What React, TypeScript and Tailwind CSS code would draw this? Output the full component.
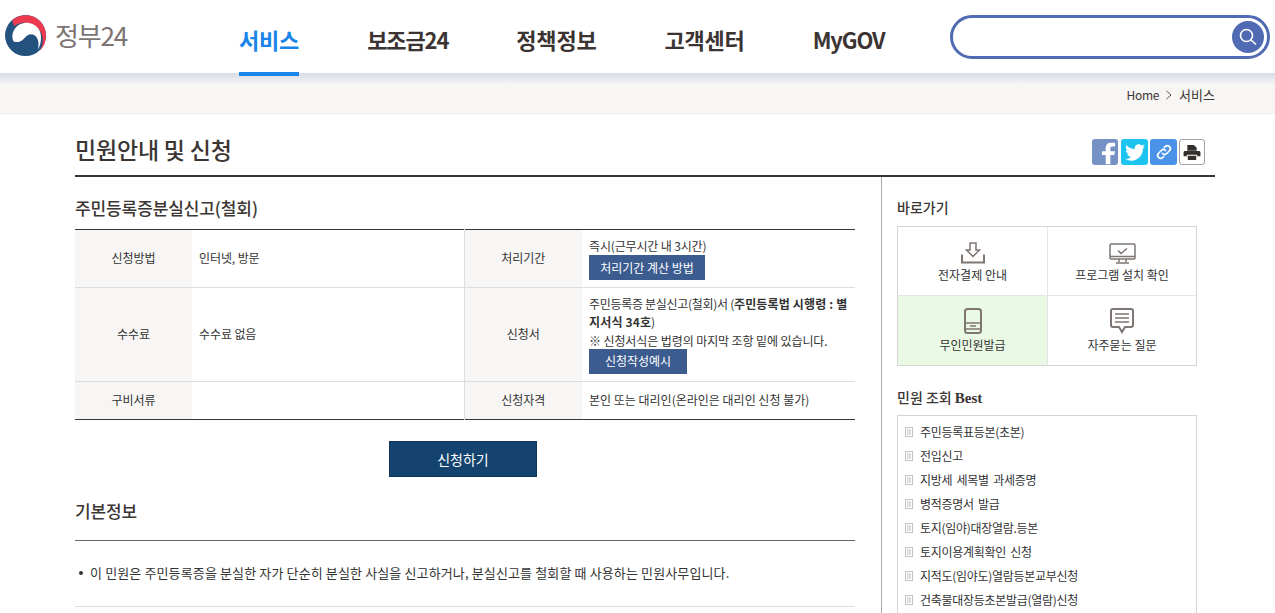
import React from "react";

function Logo() {
  return (
    <svg width="41" height="41" viewBox="0 0 40 40" className="shrink-0">
      <circle cx="20" cy="20" r="20" fill="#23527f" />
      <path d="M7 5C12 1 17 0 22 .2 32 1 40 10 40 20c0 6-2 11-6 15 2.500-4 3.500-9 2.500-14C35 13 28 7 18 7.500 14 8 11 9 9 11z" fill="#ee3a50" />
      <path d="M8 25C5 16 12 7 22 7.500c7 .5 12.500 5.500 13 12.500.5 5-.5 10-3 14 1-4 1-8-.5-11-2-4-6-5-9-3.500-3 1.500-4 5-8.500 6.500-2.500.8-5 .5-6-1z" fill="#fff" />
    </svg>
  );
}

function NavItem({ label, active, tight }: { label: string; active?: boolean; tight?: boolean }) {
  return (
    <div className={`h-[76px] flex items-center pt-[7px] border-b-[4px] text-[22px] font-bold ${tight ? "tracking-[-1.1px]" : "tracking-[-0.2px]"} ${active ? "border-[#1a85e8] text-[#1a85e8]" : "border-transparent text-[#3b3432]"}`}>
      {label}
    </div>
  );
}

function Th({ children }: { children: React.ReactNode }) {
  return <th className="bg-[#f7f6f4] font-normal text-center align-middle text-[12px] text-[#333] pb-[2px] tracking-[0px]">{children}</th>;
}

function Btn({ children, w, className }: { children: React.ReactNode; w: string; className?: string }) {
  return <div className={`${w} ${className ?? ""} h-[25px] bg-[#3c5b8f] text-white text-[12px] tracking-[0px] flex items-center justify-center`}>{children}</div>;
}

function Cell({ icon, label, green, className, iconBox }: { icon: React.ReactNode; label: string; green?: boolean; className?: string; iconBox: string }) {
  return (
    <div className={`h-[69px] flex flex-col items-center ${green ? "bg-[#e9f9e4]" : ""} ${className ?? ""}`}>
      <div className={`${iconBox} flex items-center justify-center`}>{icon}</div>
      <div className="text-[12px] leading-[20px] text-[#333] tracking-[0px]">{label}</div>
    </div>
  );
}

const best = ["주민등록표등본(초본)", "전입신고", "지방세 세목별 과세증명", "병적증명서 발급", "토지(임야)대장열람.등본", "토지이용계획확인 신청", "지적도(임야도)열람등본교부신청", "건축물대장등초본발급(열람)신청"];

export default function App() {
  return (
    <div className="h-[613px] w-[1275px] overflow-hidden bg-white text-[#333] font-['Noto_Sans_CJK_KR','Noto_Sans',sans-serif] tracking-[-0.3px]">
      <header className="h-[73px] bg-white relative z-10 flex items-start">
        <div className="w-[239px] pl-[5px] pt-[15px] flex items-center shrink-0">
          <Logo />
          <span className="ml-[9px] text-[26px] leading-[42px] text-[#7b7472] tracking-[-1.2px] -mt-[2px] font-['Noto_Sans_CJK_KR',sans-serif]">정부24</span>
        </div>
        <nav className="flex gap-[68px]">
          <NavItem label="서비스" active />
          <NavItem label="보조금24" tight />
          <NavItem label="정책정보" />
          <NavItem label="고객센터" />
          <NavItem label="MyGOV" tight />
        </nav>
        <div className="ml-[65px] mt-[15px] w-[320px] h-[44px] rounded-full border-[3px] border-[#506bb3] flex items-center justify-end pr-[3px]">
          <div className="w-[32px] h-[32px] rounded-full bg-[#506bb3] flex items-center justify-center">
            <svg width="20" height="20" viewBox="0 0 20 20" fill="none" stroke="#fff" strokeWidth="1.6">
              <circle cx="8.5" cy="8.5" r="6" />
              <path d="M13 13l5 4.5" />
            </svg>
          </div>
        </div>
      </header>

      <div className="h-[41px] border-b border-[#ebebeb] bg-gradient-to-b from-[#d8dce8] via-[#f7f6f5] via-30% to-[#f7f6f5] flex items-center justify-end pr-[60px] pt-[3px] text-[12px]">
        <span className="text-[#3b3432]">Home</span>
        <svg width="8" height="10" viewBox="0 0 8 10" fill="none" stroke="#555" className="mx-[6px]"><path d="M1.5 1l4.500 4-4.500 4" /></svg>
        <span className="text-[#3b3432] text-[13px] tracking-[0px]">서비스</span>
      </div>

      <main className="w-[1140px] ml-[75px]">
        <div className="h-[63px] border-b-2 border-[#3b3634] flex items-end justify-between pb-[10px]">
          <h1 className="text-[23px] font-medium text-[#3b3634] leading-[30px] tracking-[-0.2px] mb-[1px]">민원안내 및 신청</h1>
          <div className="flex mr-[10px]">
            <div className="w-[26px] h-[26px] rounded-[3px] bg-[#7691c5] flex items-end justify-end pr-[2px] overflow-hidden">
              <svg width="15" height="23" viewBox="0 0 16 23" fill="#fff"><path d="M5 23V13H1V9h4V6c0-4 2-6 6-6h4v4h-3c-2 0-2 1-2 2v3h5l-1 4h-4v10z" /></svg>
            </div>
            <div className="ml-[3px] w-[27px] h-[26px] rounded-[3px] bg-[#1cc4ef] flex items-center justify-center">
              <svg width="20" height="17" viewBox="0 0 24 20" fill="#fff"><path d="M24 2.400c-.9.400-1.800.700-2.800.800 1-.600 1.800-1.600 2.200-2.700-1 .600-2 1-3.100 1.200C19.300.700 18 0 16.500 0c-3.200 0-5.500 3-4.800 6C7.600 5.800 4 3.900 1.700.900.400 3.100 1 6 3.200 7.500c-.800 0-1.600-.200-2.200-.600 0 2.300 1.600 4.400 3.900 4.900-.700.200-1.500.200-2.200.100.600 2 2.400 3.400 4.600 3.400C5.200 17.100 2.600 17.900 0 17.600 2.200 19 4.800 19.800 7.500 19.800c9.100 0 14.300-7.700 14-14.600 1-.700 1.800-1.600 2.500-2.800z" /></svg>
            </div>
            <div className="ml-[2px] w-[27px] h-[26px] rounded-[3px] bg-[#4b93e9] flex items-center justify-center">
              <svg width="18" height="18" viewBox="0 0 18 18" fill="none" stroke="#fff" strokeWidth="1.700" strokeLinecap="round">
                <path d="M7.500 10.500a3 3 0 0 0 4.200 0l3-3a3 3 0 0 0-4.200-4.200L9.300 4.500" />
                <path d="M10.500 7.500a3 3 0 0 0-4.200 0l-3 3a3 3 0 0 0 4.200 4.200l1.200-1.200" />
              </svg>
            </div>
            <div className="ml-[2px] w-[26px] h-[26px] rounded-[3px] border border-[#a3a3a3] bg-white flex items-center justify-center">
              <svg width="18" height="15" viewBox="0 0 18 16" fill="#33302e">
                <path d="M4 0h7l3 3v3H4z" />
                <path d="M1.500 6.500h15c.800 0 1.500.700 1.500 1.500v4h-3.500v-1.500h-11V12H0V8c0-.800.700-1.500 1.500-1.500z" />
                <path d="M4.500 11.500h9V16h-9z" />
              </svg>
            </div>
          </div>
        </div>

        <div className="flex">
          <div className="w-[780px] shrink-0">
            <h2 className="text-[17px] font-medium leading-[24px] mt-[19px] mb-[9px] text-[#3b3634] tracking-[-0.1px]">주민등록증분실신고(철회)</h2>
            <table className="w-[780px] table-fixed border-collapse border-t border-b border-[#3b3634] text-[12px]">
              <colgroup>
                <col className="w-[117px]" />
                <col className="w-[272px]" />
                <col className="w-[118px]" />
                <col />
              </colgroup>
              <tbody>
                <tr className="h-[58px] border-b border-[#dddddd]">
                  <Th>신청방법</Th>
                  <td className="pl-[7px] pb-[2px] border-r border-[#dddddd] tracking-[-0.1px]">인터넷, 방문</td>
                  <Th>처리기간</Th>
                  <td className="pl-[7px] pt-[6px] leading-[19px] align-top tracking-[-0.15px]">
                    즉시(근무시간 내 3시간)
                    <Btn w="w-[116px]">처리기간 계산 방법</Btn>
                  </td>
                </tr>
                <tr className="h-[94px] border-b border-[#dddddd]">
                  <Th>수수료</Th>
                  <td className="pl-[7px] pb-[2px] border-r border-[#dddddd] tracking-[-0.1px]">수수료 없음</td>
                  <Th>신청서</Th>
                  <td className="pl-[7px] pt-[6.5px] pr-[4px] leading-[18.5px] align-top">
                    주민등록증 분실신고(철회)서 (<b className="font-bold tracking-[0.15px]">주민등록법 시행령 : 별지서식 34호</b>)
                    <div className="tracking-[-0.1px]">※ 신청서식은 법령의 마지막 조항 밑에 있습니다.</div>
                    <Btn w="w-[98px]" className="-mt-[1px]">신청작성예시</Btn>
                  </td>
                </tr>
                <tr className="h-[38px]">
                  <Th>구비서류</Th>
                  <td className="border-r border-[#dddddd]"></td>
                  <Th>신청자격</Th>
                  <td className="pl-[7px] pb-[2px] tracking-[0px]">본인 또는 대리인(온라인은 대리인 신청 불가)</td>
                </tr>
              </tbody>
            </table>
            <div className="flex mt-[21px] ml-[314px]">
              <div className="w-[148px] h-[36px] bg-[#14436f] text-white text-[14px] tracking-[0px] border border-[#0f3558] flex items-center justify-center">신청하기</div>
            </div>
            <h2 className="text-[17px] font-medium leading-[24px] mt-[22px] text-[#3b3634] tracking-[-0.1px]">기본정보</h2>
            <div className="mt-[17px] border-t border-[#6e625c] pt-[23px] pb-[24px] flex items-center pl-[4px] text-[13px] tracking-[0.13px] leading-[18px]">
              <span className="w-[4px] h-[4px] rounded-full bg-[#333] mr-[7px]"></span>
              이 민원은 주민등록증을 분실한 자가 단순히 분실한 사실을 신고하거나, 분실신고를 철회할 때 사용하는 민원사무입니다.
            </div>
            <div className="border-t border-[#dddddd]"></div>
          </div>

          <aside className="ml-[26px] w-[334px] h-[500px] border-l border-[#a9a9a9] pl-[15px] pt-[20px]">
            <h3 className="text-[14px] font-medium leading-[20px] text-[#3b3634] tracking-[0px]">바로가기</h3>
            <div className="mt-[9px] w-[300px] grid grid-cols-[150px_1fr] border border-[#d5d5d5]">
              <Cell iconBox="pt-[14px] h-[38px]" className="border-r border-b border-[#e5e5e5]" label="전자결제 안내" icon={
                <svg width="24" height="22" viewBox="0 0 24 22" fill="none" stroke="#7e7673" strokeWidth="1.500"><path d="M9 1h6v7h3.500L12 14.500 5.500 8H9z" /><path d="M1 12.500V20.500h22v-8" strokeWidth="2" /></svg>
              } />
              <Cell iconBox="pt-[14px] h-[38px]" className="border-b border-[#e5e5e5]" label="프로그램 설치 확인" icon={
                <svg width="27" height="21" viewBox="0 0 27 21" fill="none" stroke="#7e7673" strokeWidth="1.500"><rect x="1" y="1" width="25" height="15" rx="1" /><path d="M1 13.500h25M9 7.500l3 3 6-5M10 16v3M17 16v3M7 20h13" /></svg>
              } />
              <Cell iconBox="pt-[10px] h-[39px]" className="border-r border-[#e5e5e5]" green label="무인민원발급" icon={
                <svg width="18" height="26" viewBox="0 0 18 26" fill="none" stroke="#7e7673" strokeWidth="2"><rect x="1" y="1" width="16" height="24" rx="2.500" /><path d="M1 15h16M1 21h16M6 18h6" strokeWidth="1.500" /></svg>
              } />
              <Cell iconBox="pt-[10px] h-[39px]" label="자주묻는 질문" icon={
                <svg width="24" height="26" viewBox="0 0 24 26" fill="none" stroke="#7e7673" strokeWidth="2"><path d="M3 1h18c1 0 2 1 2 2v14c0 1-1 2-2 2h-6l-3 5-3-5H3c-1 0-2-1-2-2V3c0-1 1-2 2-2z" /><path d="M5 6h14M5 10h14M5 14h14" strokeWidth="1.500" /></svg>
              } />
            </div>

            <h3 className="mt-[21px] text-[14px] font-medium leading-[20px] text-[#3b3634] tracking-[0px]">민원 조회 <span className="font-['Liberation_Serif',serif] font-bold text-[15px]">Best</span></h3>
            <ul className="mt-[7px] w-[300px] border border-[#d5d5d5] pt-[4px] pb-[10px] pl-[7px] text-[12px] [word-spacing:2px]">
              {best.map((t) => (
                <li key={t} className="h-[24px] flex items-center text-[#333]">
                  <svg width="8" height="10" viewBox="0 0 8 10" className="mr-[7px] shrink-0" fill="none" stroke="#c0c0c0"><rect x=".5" y=".5" width="7" height="9" /><path d="M2 3h4M2 5h4M2 7h4" /></svg>
                  {t}
                </li>
              ))}
            </ul>
          </aside>
        </div>
      </main>
    </div>
  );
}
